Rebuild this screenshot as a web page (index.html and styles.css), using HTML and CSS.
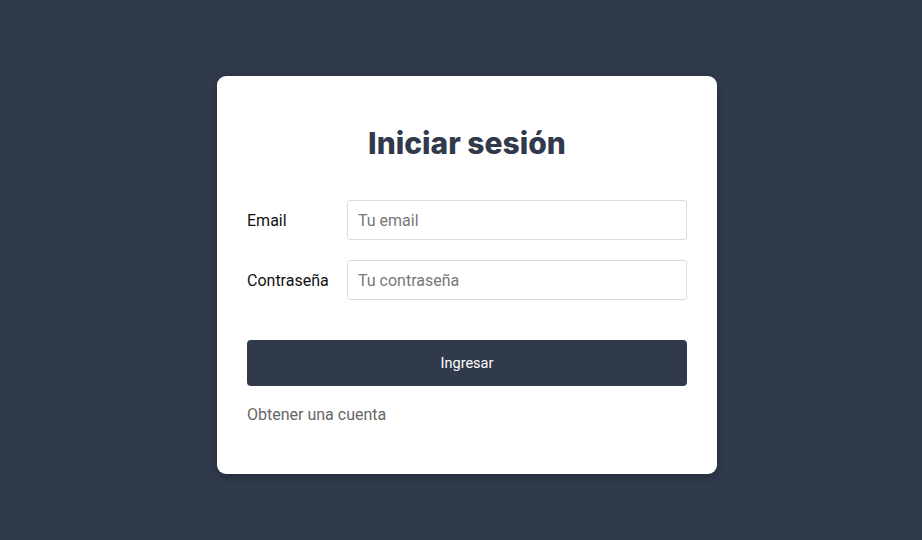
FILE: index.html
```html
<!DOCTYPE html>
<html lang="es">
<head>
<meta charset="utf-8">
<title>Iniciar sesión</title>
<link rel="stylesheet" href="styles.css">
</head>
<body>
<main class="page">
  <section class="card">
    <h1 class="title">Iniciar sesión</h1>
    <form class="form">
      <div class="row">
        <label class="label" for="email">Email</label>
        <input class="input" id="email" type="email" placeholder="Tu email">
      </div>
      <div class="row">
        <label class="label" for="pass">Contraseña</label>
        <input class="input" id="pass" type="password" placeholder="Tu contraseña">
      </div>
      <button class="button" type="button">Ingresar</button>
    </form>
    <a class="link" href="#">Obtener una cuenta</a>
  </section>
</main>
</body>
</html>
```

FILE: styles.css
```css
* { box-sizing: border-box; }
html, body { margin: 0; height: 100%; }
body {
  background: #303a4b;
  font-family: Roboto, "Liberation Sans", sans-serif;
}
.page {
  display: flex;
  justify-content: center;
  padding: 76px 0 0 12px;
}
.card {
  width: 500px;
  height: 398px;
  background: #fff;
  border-radius: 9px;
  padding: 49px 30px 0;
  box-shadow: 0 3px 8px rgba(0,0,0,0.25);
}
.title {
  margin: 0;
  text-align: center;
  font-family: Inter, "Noto Sans", sans-serif;
  font-weight: 800;
  font-size: 30px;
  line-height: 36px;
  color: #303a4b;
  letter-spacing: 0;
}
.form {
  margin-top: 39px;
  display: flex;
  flex-direction: column;
  gap: 20px;
}
.row {
  display: flex;
  align-items: center;
}
.label {
  width: 100px;
  flex: none;
  font-size: 16px;
  color: #111;
}
.input {
  flex: 1;
  height: 40px;
  border: 1px solid #dcdcdc;
  border-radius: 3px;
  padding: 0 10px;
  font-family: Roboto, "Liberation Sans", sans-serif;
  font-size: 16px;
  color: #333;
  background: #fff;
}
.input::placeholder { color: #777; }
.button {
  margin-top: 20px;
  height: 46px;
  border: none;
  border-radius: 4px;
  background: #303a4b;
  color: #fff;
  font-family: Roboto, "Liberation Sans", sans-serif;
  font-size: 14.5px;
}
.link {
  display: block;
  margin-top: 19px;
  font-size: 16px;
  line-height: 20px;
  color: #666;
  text-decoration: none;
}
```
